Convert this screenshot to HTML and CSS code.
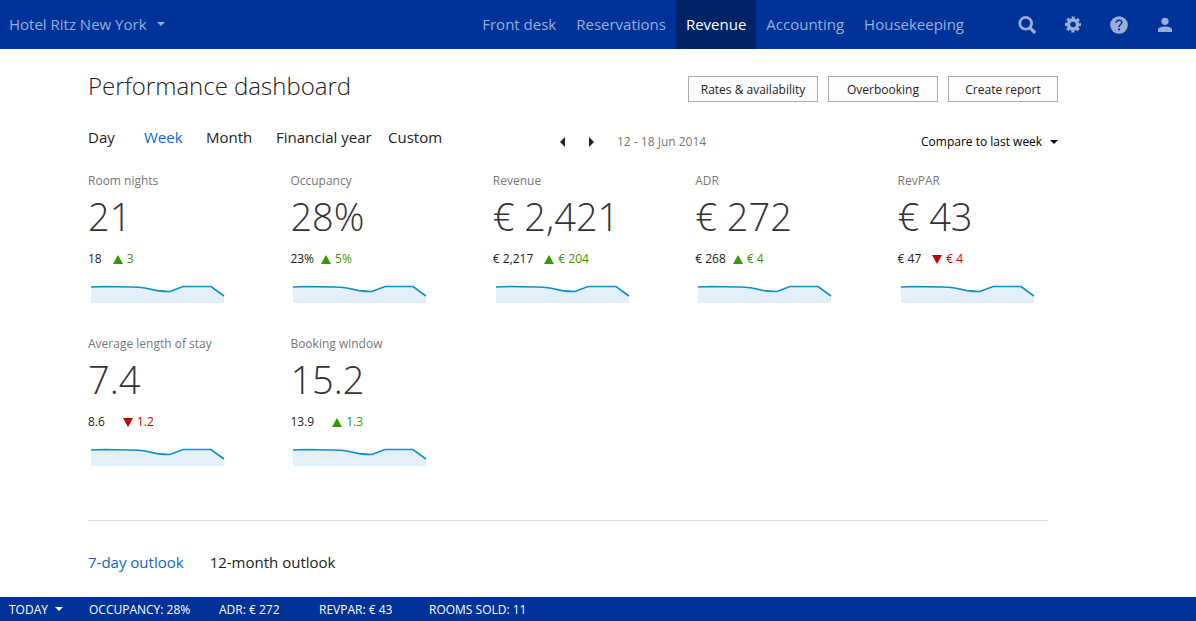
FILE: index.html
```html
<!DOCTYPE html>
<html lang="en">
<head>
    <meta charset="UTF-8">
    <meta name="viewport" content="width=device-width, initial-scale=1.0">
    <title>Performance dashboard</title>
    <link rel="stylesheet" href="styles.css">
</head>
<body>
    <svg class="defs" aria-hidden="true">
        <symbol id="spark" viewBox="0 0 134 18">
            <path d="M0 2 L14 1.5 L40 2 L54 3 L67 6 L79 6.5 L92 1.5 L120 1.5 L133 11 V18 H0 Z" fill="#e3f0f9"/>
            <path d="M0 2 L14 1.5 L40 2 Q48 2.2 54 3 L66 5.6 Q72 6.4 79 6.5 L92 1.5 L120 1.5 L133 11" fill="none" stroke="#0f8fca" stroke-width="1.6"/>
        </symbol>
    </svg>

    <header class="topbar">
        <div class="dropdown hotel">
            <select aria-label="Hotel">
                <option>Hotel Ritz New York</option>
            </select>
            <span class="caret"></span>
        </div>
        <nav class="main-nav">
            <a href="#">Front desk</a>
            <a href="#">Reservations</a>
            <a href="#" class="active">Revenue</a>
            <a href="#">Accounting</a>
            <a href="#">Housekeeping</a>
        </nav>
        <div class="tools">
            <button aria-label="Search">
                <svg width="20" height="20" viewBox="0 0 20 20" fill="none" stroke="currentColor">
                    <circle cx="8.7" cy="8.3" r="5.9" stroke-width="2.8"/>
                    <path d="M13 12.8 L17.3 17" stroke-width="3.2" stroke-linecap="round"/>
                </svg>
            </button>
            <button aria-label="Settings">
                <svg width="20" height="20" viewBox="0 0 20 20" fill="none" stroke="currentColor">
                    <circle cx="10" cy="9.5" r="4.5" stroke-width="3.4"/>
                    <circle cx="10" cy="9.5" r="6.9" stroke-width="2.4" stroke-dasharray="3.1 2.319" stroke-dashoffset="1.55"/>
                </svg>
            </button>
            <button aria-label="Help">
                <svg width="20" height="20" viewBox="0 0 20 20">
                    <circle cx="10" cy="10" r="8.8" fill="currentColor"/>
                    <path d="M7.2 7.8 C7.2 4.4 12.8 4.2 12.8 7.5 C12.8 9.6 10 9.5 10 12" fill="none" stroke="#003399" stroke-width="1.5"/>
                    <circle cx="10" cy="14.4" r="1.1" fill="#003399"/>
                </svg>
            </button>
            <button aria-label="Account">
                <svg width="20" height="20" viewBox="0 0 20 20" fill="currentColor">
                    <circle cx="10" cy="6.3" r="3.6"/>
                    <path d="M3 17 V14.6 C3 12.6 7 11.6 10 11.6 S17 12.6 17 14.6 V17 Z"/>
                </svg>
            </button>
        </div>
    </header>

    <main class="page">
        <div class="page-head">
            <h1>Performance dashboard</h1>
            <div class="actions">
                <button class="wide">Rates &amp; availability</button>
                <button>Overbooking</button>
                <button>Create report</button>
            </div>
        </div>

        <div class="toolbar">
            <nav class="tabs">
                <a href="#">Day</a>
                <a href="#" class="active">Week</a>
                <a href="#">Month</a>
                <a href="#">Financial year</a>
                <a href="#">Custom</a>
            </nav>
            <div class="period">
                <button class="prev" aria-label="Previous week"></button>
                <button class="next" aria-label="Next week"></button>
                <span>12 - 18 Jun 2014</span>
            </div>
            <div class="dropdown compare">
                <select aria-label="Comparison">
                    <option>Compare to last week</option>
                </select>
                <span class="caret"></span>
            </div>
        </div>

        <section class="kpis">
            <div class="kpi">
                <h2>Room nights</h2>
                <p class="value">21</p>
                <p class="change"><span>18</span><span class="up">3</span></p>
                <svg class="spark"><use href="#spark"/></svg>
            </div>
            <div class="kpi">
                <h2>Occupancy</h2>
                <p class="value">28%</p>
                <p class="change tight"><span>23%</span><span class="up">5%</span></p>
                <svg class="spark"><use href="#spark"/></svg>
            </div>
            <div class="kpi">
                <h2>Revenue</h2>
                <p class="value">€ 2,421</p>
                <p class="change"><span>€ 2,217</span><span class="up">€ 204</span></p>
                <svg class="spark"><use href="#spark"/></svg>
            </div>
            <div class="kpi">
                <h2>ADR</h2>
                <p class="value">€ 272</p>
                <p class="change tight"><span>€ 268</span><span class="up">€ 4</span></p>
                <svg class="spark"><use href="#spark"/></svg>
            </div>
            <div class="kpi">
                <h2>RevPAR</h2>
                <p class="value">€ 43</p>
                <p class="change"><span>€ 47</span><span class="down">€ 4</span></p>
                <svg class="spark"><use href="#spark"/></svg>
            </div>
            <div class="kpi">
                <h2>Average length of stay</h2>
                <p class="value">7.4</p>
                <p class="change loose"><span>8.6</span><span class="down">1.2</span></p>
                <svg class="spark"><use href="#spark"/></svg>
            </div>
            <div class="kpi">
                <h2>Booking window</h2>
                <p class="value">15.2</p>
                <p class="change loose"><span>13.9</span><span class="up">1.3</span></p>
                <svg class="spark"><use href="#spark"/></svg>
            </div>
        </section>

        <nav class="outlook">
            <a href="#" class="active">7-day outlook</a>
            <a href="#">12-month outlook</a>
        </nav>
    </main>

    <footer class="statusbar">
        <div class="dropdown today">
            <select aria-label="Status period">
                <option>TODAY</option>
            </select>
            <span class="caret"></span>
        </div>
        <span>OCCUPANCY: 28%</span>
        <span>ADR: € 272</span>
        <span>REVPAR: € 43</span>
        <span>ROOMS SOLD: 11</span>
    </footer>
</body>
</html>
```
FILE: styles.css
```css
* {
    box-sizing: border-box;
}
body {
    margin: 0;
    min-height: 100vh;
    display: flex;
    flex-direction: column;
    background: #fff;
    color: #222;
    font-family: "Segoe UI", "Open Sans", sans-serif;
    font-size: 12px;
}
a {
    color: inherit;
    text-decoration: none;
}
button, select {
    font: inherit;
    color: inherit;
    background: none;
    border: none;
    padding: 0;
    cursor: pointer;
}
h1, h2, p {
    margin: 0;
}
.defs {
    display: none;
}

/* dropdowns */
.dropdown {
    display: flex;
    align-items: center;
    gap: 7px;
}
.dropdown select {
    appearance: none;
}
.caret {
    border: 4px solid transparent;
    border-top-color: currentColor;
    border-bottom: none;
}

/* top bar */
.topbar {
    display: flex;
    height: 49px;
    padding: 0 8px 0 9px;
    background: #003399;
    color: #99add6;
    font-size: 15px;
}
.hotel {
    gap: 10px;
    margin-right: auto;
    padding-bottom: 2px;
}
.main-nav {
    display: flex;
}
.main-nav a {
    padding: 0 10px;
    line-height: 49px;
}
.main-nav .active {
    background: #002266;
    color: #fff;
}
.tools {
    display: flex;
    margin-left: 30px;
}
.tools button {
    width: 46px;
    display: flex;
    align-items: center;
    justify-content: center;
}

/* page */
.page {
    flex: 1;
    padding: 0 138px 0 88px;
}
.page-head {
    display: flex;
    justify-content: space-between;
    align-items: flex-end;
    padding-top: 20px;
}
h1 {
    font-size: 24px;
    font-weight: 300;
    line-height: 33px;
}
.actions {
    display: flex;
    gap: 10px;
}
.actions button {
    width: 110px;
    height: 26px;
    border: 1px solid #aaa;
    background: #fdfdfd;
}
.actions .wide {
    width: 130px;
}
.toolbar {
    display: grid;
    grid-template-columns: 472px auto 1fr;
    align-items: end;
    margin-top: 22px;
    line-height: 16px;
}
.tabs {
    display: grid;
    grid-template-columns: 56px 62px 70px 112px auto;
    font-size: 15px;
    line-height: 26px;
}
.tabs .active, .outlook .active {
    color: #1166cc;
}
.period {
    display: flex;
    align-items: center;
    color: #777;
}
.prev, .next {
    border: 5px solid transparent;
}
.prev {
    border-left: none;
    border-right-color: #222;
    margin-right: 24px;
}
.next {
    border-right: none;
    border-left-color: #222;
    margin-right: 23px;
}
.compare {
    justify-self: end;
    color: #000;
}

/* figures */
.kpis {
    display: grid;
    grid-template-columns: repeat(5, 1fr);
    column-gap: 42px;
    row-gap: 33px;
    margin-top: 23px;
    padding-bottom: 54px;
}
.kpi h2 {
    color: #777;
    font-size: 12px;
    font-weight: 400;
    line-height: 16px;
}
.value {
    color: #333;
    font-size: 38px;
    font-weight: 300;
    line-height: 54px;
}
.change {
    display: flex;
    gap: 11px;
    line-height: 32px;
}
.tight {
    gap: 7px;
}
.loose {
    gap: 18px;
}
.up, .down {
    display: flex;
    align-items: center;
    gap: 4px;
}
.up {
    color: #339900;
}
.down {
    color: #cc0000;
}
.up::before, .down::before {
    content: "";
    border: 5px solid transparent;
}
.up::before {
    border-top: none;
    border-bottom: 9px solid #339900;
}
.down::before {
    border-bottom: none;
    border-top: 9px solid #cc0000;
}
.spark {
    display: block;
    width: 134px;
    height: 18px;
    margin: 10px 0 0 3px;
}

/* outlook */
.outlook {
    display: flex;
    gap: 26px;
    margin-right: 10px;
    padding-top: 29px;
    border-top: 1px solid #ddd;
    font-size: 15px;
    line-height: 24px;
}

/* status bar */
.statusbar {
    display: grid;
    grid-template-columns: 80px 130px 100px 110px auto;
    align-items: center;
    height: 24px;
    padding-left: 9px;
    background: #003399;
    color: #fff;
}
```
